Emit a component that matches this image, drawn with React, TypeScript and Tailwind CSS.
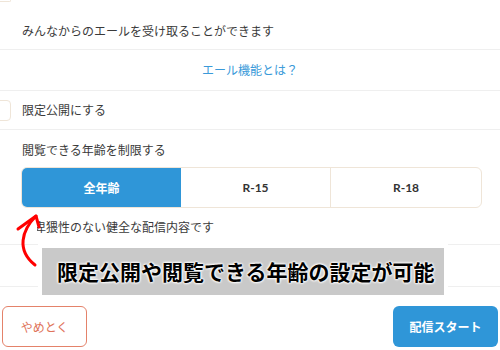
import React from "react";

export default function App() {
  return (
    <div className="relative w-[500px] h-[350px] overflow-hidden bg-white text-[#3a3a3a] font-['Noto_Sans_CJK_JP',sans-serif]">
      {/* top spacer with bottom of previous checkbox */}
      <div className="h-[12px]">
        <div className="h-[2px] w-[11px] border-b border-r border-[#efe5d8] rounded-br-[4px]" />
      </div>

      {/* row 1 */}
      <div className="h-[38px] flex items-center pl-[22px] border-b border-[#efefef] text-[12px] leading-[18px]">
        みんなからのエールを受け取ることができます
      </div>

      {/* row 2 */}
      <div className="h-[41px] flex items-center justify-center border-b border-[#efefef] text-[12px] leading-[18px] text-[#3a9ad9]">
        エール機能とは？
      </div>

      {/* row 3 */}
      <div className="h-[39px] flex items-center border-b border-[#efefef] text-[12px] leading-[18px]">
        <div className="ml-[-10px] w-[21px] h-[21px] border border-[#efe5d8] rounded-[4px] bg-white" />
        <span className="ml-[11px]">限定公開にする</span>
      </div>

      {/* age restriction */}
      <div className="pl-[21px] pr-[18px] pt-[11px] pb-[8px] border-b border-[#efefef]">
        <div className="pl-[1px] text-[12px] leading-[18px]">閲覧できる年齢を制限する</div>
        <div className="mt-[8px] h-[41px] flex border border-[#efe5d8] rounded-[6px] overflow-hidden text-[12px] font-bold">
          <div className="w-[159px] flex items-center justify-center bg-[#2f96d8] text-white">全年齢</div>
          <div className="w-[150px] flex items-center justify-center border-r border-[#efe5d8] font-['Lato',sans-serif] text-[#333]">R-15</div>
          <div className="flex-1 flex items-center justify-center font-['Lato',sans-serif] text-[#333]">R-18</div>
        </div>
        <div className="mt-[10px] pl-[1px] text-[12px] leading-[18px]">※卑猥性のない健全な配信内容です</div>
      </div>

      {/* hidden row */}
      <div className="h-[42px] border-b border-[#efefef]" />

      {/* buttons */}
      <div className="mt-[19px] px-[2px] flex justify-between">
        <button className="w-[85px] h-[41px] rounded-[6px] border border-[#e4826a] text-[#e0735a] text-[12px]">
          やめとく
        </button>
        <button className="w-[105px] h-[41px] rounded-[6px] bg-[#2f96d8] text-white text-[12px] font-bold">
          配信スタート
        </button>
      </div>

      {/* annotation banner */}
      <div className="absolute left-[38px] top-[243px] w-[410px] h-[57px] bg-white p-[4px] pt-[5px] pb-[5px]">
        <div className="w-full h-full bg-[#c9c9c9] flex items-center pl-[15px]">
          <span className="text-[21px] font-bold text-black leading-none [text-shadow:0_0_2px_#fff,0_0_2px_#fff,0_0_3px_#fff,0_0_3px_#fff]">
            限定公開や閲覧できる年齢の設定が可能
          </span>
        </div>
      </div>

      {/* white mask + red arrow */}
      <div className="absolute left-[14px] top-[216px] w-[23px] h-[22px] bg-white" />
      <svg className="absolute left-0 top-[205px]" width="50" height="70" viewBox="0 205 50 70">
        <path d="M36 216 C 22 230, 16 250, 35 265" fill="none" stroke="#ff0000" strokeWidth="3" strokeLinecap="round" />
        <path d="M18 229 L36 216 L39 227" fill="none" stroke="#ff0000" strokeWidth="3" strokeLinecap="round" strokeLinejoin="round" />
      </svg>
    </div>
  );
}
